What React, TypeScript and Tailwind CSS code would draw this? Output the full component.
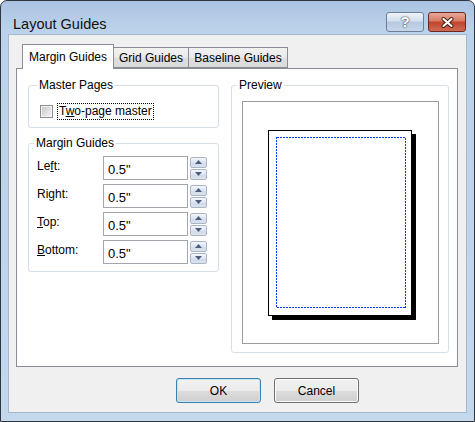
import type { ReactNode } from 'react'

const rows = [
  { pre: 'Le', key: 'f', post: 't:' },
  { pre: 'Ri', key: 'g', post: 'ht:' },
  { pre: '', key: 'T', post: 'op:' },
  { pre: '', key: 'B', post: 'ottom:' },
]

function GroupBox({ title, className, legendClass, children }: { title: string; className: string; legendClass?: string; children: ReactNode }) {
  return (
    <fieldset className={`rounded-[3px] border border-[#d5dfe5] ${className}`}>
      <legend className={`px-[2px] text-[12px] leading-[14px] ${legendClass ?? '-ml-[3px]'}`}>{title}</legend>
      {children}
    </fieldset>
  )
}

function SpinButton({ up }: { up?: boolean }) {
  return (
    <div className="flex h-[11px] w-[17px] items-center justify-center rounded-[2px] border border-[#aab6c8] bg-[linear-gradient(to_bottom,#f3f6fb,#dde5f0_50%,#cfd9e8_51%,#dbe3ee)]">
      <svg width="7" height="4" viewBox="0 0 7 4">
        {up ? <path d="M0 4 L3.5 0 L7 4 Z" fill="#4b5f80" /> : <path d="M0 0 L3.5 4 L7 0 Z" fill="#4b5f80" />}
      </svg>
    </div>
  )
}

function Button({ label, primary }: { label: string; primary?: boolean }) {
  return (
    <button
      className={`flex h-[25px] w-[85px] items-center justify-center rounded-[3px] border bg-[linear-gradient(to_bottom,#f2f2f2,#ebebeb_50%,#dddddd_51%,#cfcfcf)] text-[12px] ${
        primary ? 'border-[#3c7fb1] shadow-[inset_0_0_0_1px_#c4e5f6]' : 'border-[#707070] shadow-[inset_0_0_0_1px_#fcfcfc]'
      }`}
    >
      {label}
    </button>
  )
}

export default function App() {
  return (
    <div className="h-[422px] w-[475px] bg-white font-['Liberation_Sans',Arial,sans-serif] text-black">
      <div className="flex h-[422px] w-[475px] flex-col rounded-t-[7px] border border-[#30363f] bg-[linear-gradient(to_bottom,#a9c3e2_0px,#bcd2ea_28px,#c3d7ed_100%)] px-[7px] pb-[8px]">
        {/* title bar */}
        <div className="flex h-[33px] items-start justify-between pr-[1px]">
          <span className="pl-[5px] pt-[14px] text-[14.5px] leading-[18px] text-[#111]">Layout Guides</span>
          <div className="mt-[11px] flex gap-[4px]">
            <div className="flex h-[20px] w-[38px] items-center justify-center rounded-[3px] border border-[#6d7f97] bg-[linear-gradient(to_bottom,#eef3f9,#d3dfee_45%,#b7c9e0_50%,#c6d7eb)]">
              <span className="text-[15px] font-bold leading-[16px] text-white [text-shadow:0_0_2px_#2d3b4e,0_0_1px_#2d3b4e]">?</span>
            </div>
            <div className="flex h-[20px] w-[38px] items-center justify-center rounded-[3px] border border-[#6a2a22] bg-[linear-gradient(to_bottom,#e9a899,#d77a65_45%,#c2442e_50%,#d06a52)]">
              <svg width="13" height="11" viewBox="0 0 13 11">
                <path d="M2.5 2 L10.5 9 M10.5 2 L2.5 9" stroke="#4a1a12" strokeWidth="4" strokeLinecap="round" />
                <path d="M2.5 2 L10.5 9 M10.5 2 L2.5 9" stroke="#fff" strokeWidth="2.2" strokeLinecap="round" />
              </svg>
            </div>
          </div>
        </div>

        {/* client */}
        <div className="flex flex-1 flex-col border border-[#a3b8d2] bg-[#f0f0f0] pb-[9px] pl-[7px] pr-[8px] pt-[9px]">
          <div className="ml-[6px] flex items-end text-[12px]">
            <div className="relative z-10 -mb-px flex h-[25px] w-[92px] items-center justify-center border border-b-0 border-[#898c95] bg-white pb-[1px]">
              Margin Guides
            </div>
            <div className="flex h-[21px] w-[75px] items-center justify-center border border-l-0 border-[#898c95] bg-[linear-gradient(to_bottom,#f2f2f2,#e9e9e9_50%,#dedede_51%,#dadada)]">
              Grid Guides
            </div>
            <div className="flex h-[21px] w-[99px] items-center justify-center border border-l-0 border-[#898c95] bg-[linear-gradient(to_bottom,#f2f2f2,#e9e9e9_50%,#dedede_51%,#dadada)]">
              Baseline Guides
            </div>
          </div>

          <div className="flex h-[299px] gap-[12px] border border-[#898c95] bg-white pl-[11px] pr-[8px] pt-[9px] text-[12px]">
            <div className="flex w-[191px] flex-col gap-[8px]">
              <GroupBox title="Master Pages" className="h-[50px] pl-[11px] pt-[11px]">
                <div className="flex items-center gap-[4px]">
                  <span className="block h-[13px] w-[13px] border border-[#8e8f8f] bg-[#f4f4f4] p-[1px]">
                    <span className="block h-full w-full bg-[linear-gradient(135deg,#c6cad1,#f2f2f2)]" />
                  </span>
                  <span className="border border-dotted border-black px-px leading-[15px]">
                    T<span className="underline">w</span>o-page master
                  </span>
                </div>
              </GroupBox>

              <GroupBox title="Margin Guides" className="h-[136px] pl-[8px] pt-[6px]">
                <div className="flex flex-col gap-[4px]">
                  {rows.map((r) => (
                    <div key={r.post} className="flex items-center">
                      <span className="w-[66px] pb-[5px]">
                        {r.pre}
                        <span className="underline">{r.key}</span>
                        {r.post}
                      </span>
                      <div className="flex h-[24px] w-[85px] items-center border border-[#a3a6ad] bg-white pl-[4px] pt-[3px] text-[13px]">
                        0.5"
                      </div>
                      <div className="ml-[2px] flex flex-col gap-[1px]">
                        <SpinButton up />
                        <SpinButton />
                      </div>
                    </div>
                  ))}
                </div>
              </GroupBox>
            </div>

            <GroupBox title="Preview" className="h-[275px] w-[218px] pl-[10px] pt-[9px]" legendClass="-ml-[5px]">
              <div className="h-[243px] w-[197px] border border-[#9c9c9c] bg-white pl-[25px] pt-[28px]">
                <div className="h-[186px] w-[144px] border border-black bg-white shadow-[4px_4px_0_#000]">
                  {/* margin guide outline */}
                  <svg width="142" height="184" viewBox="0 0 142 184" shapeRendering="crispEdges">
                    <rect x="7.5" y="6.5" width="129" height="170" fill="none" stroke="#0040e0" strokeWidth="1" strokeDasharray="2 1" />
                  </svg>
                </div>
              </div>
            </GroupBox>
          </div>

          <div className="mt-[11px] flex gap-[13px] pl-[160px]">
            <Button label="OK" primary />
            <Button label="Cancel" />
          </div>
        </div>
      </div>
    </div>
  )
}
